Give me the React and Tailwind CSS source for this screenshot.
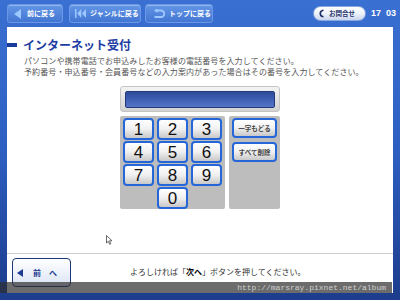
import React from "react"

const jp = { fontFamily: '"Noto Sans CJK JP", "Noto Sans", sans-serif' }

function TopButton({ icon, label, className }) {
    return (
        <div className={`h-[19px] shrink-0 flex items-center rounded-[3px] border border-[#6a98e6] bg-gradient-to-b from-[#6496e6] to-[#4276d2] shadow-[inset_0_1px_0_rgba(255,255,255,0.3)] ${className}`}>
            {icon}
            <span className="text-[7px] font-bold text-white leading-none whitespace-nowrap">{label}</span>
        </div>
    )
}

function Key({ n }) {
    return (
        <div className="h-[22px] rounded-[4px] border-2 border-[#2566d8] bg-gradient-to-b from-white via-[#f0f0f0] to-[#c8c8c8] flex items-center justify-center text-[17px] leading-none text-[#111]" style={{ fontFamily: '"Liberation Sans", Arial, sans-serif' }}>
            {n}
        </div>
    )
}

function SideKey({ label }) {
    return (
        <div className="h-[20px] rounded-[4px] border-2 border-[#2566d8] bg-gradient-to-b from-white via-[#f0f0f0] to-[#c8c8c8] flex items-center justify-center text-[6.5px] font-bold text-[#444] leading-none whitespace-nowrap">
            {label}
        </div>
    )
}

export default function App() {
    return (
        <div className="w-[400px] h-[300px] relative overflow-hidden bg-gradient-to-b from-[#3a70d2] via-[#2d5fc2] to-[#1d3c8c]" style={jp}>
            {/* top bar */}
            <div className="h-[27px] flex items-center pl-[7px] pr-[4px]">
                <TopButton
                    className="w-[56px] pl-[6px] gap-[5px]"
                    label="前に戻る"
                    icon={<svg width="8" height="10" viewBox="0 0 8 10"><path d="M7 0 L0 5 L7 10 Z" fill="#9cc7ff" /></svg>}
                />
                <TopButton
                    className="w-[72px] ml-[6px] pl-[5px] gap-[3px]"
                    label="ジャンルに戻る"
                    icon={<svg width="12" height="9" viewBox="0 0 12 9"><rect x="0" y="0" width="1.5" height="9" fill="#9cc7ff" /><path d="M6.3 0 L2.2 4.5 L6.3 9 Z M11 0 L6.9 4.5 L11 9 Z" fill="#9cc7ff" /></svg>}
                />
                <TopButton
                    className="w-[68px] ml-[4px] pl-[7px] gap-[4px]"
                    label="トップに戻る"
                    icon={<svg width="12" height="10" viewBox="0 0 12 10"><path d="M4 1.5 H8 A3.2 3.2 0 0 1 8 8 H1.5" stroke="#9cc7ff" strokeWidth="1.8" fill="none" /><path d="M4.5 -1 L1 1.5 L4.5 4 Z" fill="#9cc7ff" /></svg>}
                />
                <div className="flex-1" />
                <div className="w-[53px] h-[15px] rounded-full bg-gradient-to-b from-white via-[#eef3fb] to-[#c9d6ee] border border-[#8aa8dc] flex items-center pl-[5px] gap-[5px]">
                    <svg width="5" height="9" viewBox="0 0 5 9"><path d="M4.5 0.5 C1 1 0.5 3 0.5 4.5 C0.5 6 1 8 4.5 8.5 L4.5 7 C2.5 6.5 2.2 5.5 2.2 4.5 C2.2 3.5 2.5 2.5 4.5 2 Z" fill="#1c2f66" /></svg>
                    <span className="text-[6.5px] font-bold text-[#1d3068] leading-none whitespace-nowrap">お問合せ</span>
                </div>
                <div className="ml-[5px] text-[9px] font-bold text-white leading-none whitespace-nowrap" style={{ fontFamily: '"Liberation Sans", Arial, sans-serif' }}>17&nbsp;&nbsp;03</div>
            </div>

            {/* main panel */}
            <div className="ml-[7px] w-[386px] h-[266px] bg-white flex flex-col">
                <div className="flex items-center pt-[10px]">
                    <div className="w-[10px] h-[4px] bg-[#1a3a9c]" />
                    <div className="ml-[6px] text-[12px] font-bold text-[#1e3ea4] leading-[16px]">インターネット受付</div>
                </div>
                <div className="pl-[17px] pt-[2px] text-[8px] text-[#555] leading-[11px] tracking-[0.1px]">
                    <div>パソコンや携帯電話でお申込みしたお客様の電話番号を入力してください。</div>
                    <div>予約番号・申込番号・会員番号などの入力案内があった場合はその番号を入力してください。</div>
                </div>

                {/* keypad */}
                <div className="ml-[113px] mt-[9px] w-[160px] flex flex-col gap-[4px]">
                    <div className="h-[26px] rounded-[3px] border border-[#c4c4c4] bg-gradient-to-b from-[#f4f4f4] to-[#d2d2d2] px-[4px] pt-[4px]">
                        <div className="h-[17px] rounded-[2px] bg-gradient-to-b from-[#2e4a98] via-[#3e5fb4] to-[#5576c6] border border-[#22397c]" />
                    </div>
                    <div className="flex gap-[4px]">
                        <div className="w-[105px] h-[93px] bg-[#bdbdbd] rounded-[2px] p-[2px_3px] grid grid-cols-3 gap-x-[3px] gap-y-[1px] content-start">
                            {[1, 2, 3, 4, 5, 6, 7, 8, 9].map(n => <Key key={n} n={n} />)}
                            <div />
                            <Key n={0} />
                        </div>
                        <div className="w-[51px] h-[93px] bg-[#bdbdbd] rounded-[2px] p-[2px_3px] flex flex-col gap-[4px]">
                            <SideKey label="一字もどる" />
                            <SideKey label="すべて削除" />
                        </div>
                    </div>
                </div>

                {/* cursor */}
                <div className="ml-[99px] mt-[26px]">
                    <svg width="7" height="10" viewBox="0 0 7 10"><path d="M0.5 0.5 L0.5 8 L2.3 6.3 L3.6 9.3 L4.8 8.8 L3.5 5.8 L6 5.8 Z" fill="white" stroke="#444" strokeWidth="0.8" /></svg>
                </div>

                <div className="mt-[8px] h-px bg-[#cccccc]" />

                {/* footer */}
                <div className="flex items-center pt-[4px]">
                    <div className="ml-[5px] w-[59px] h-[29px] rounded-[4px] border-[1.5px] border-[#1b3777] bg-gradient-to-b from-white to-[#dbe4f4] flex items-center pl-[4px]">
                        <svg width="6" height="8" viewBox="0 0 6 8"><path d="M6 0 L0 4 L6 8 Z" fill="#1b3a92" /></svg>
                        <span className="ml-[10px] text-[8px] font-bold text-[#1b3a92] leading-none">前</span>
                        <span className="ml-[8px] text-[8px] font-bold text-[#1b3a92] leading-none">へ</span>
                    </div>
                    <div className="ml-[59px] mt-[-1px] text-[8px] text-[#333] leading-none whitespace-nowrap">
                        よろしければ「<span className="font-bold text-black">次へ</span>」ボタンを押してください。
                    </div>
                </div>
            </div>

            {/* watermark band */}
            <div className="absolute left-0 top-[282px] w-[392px] h-[11px] bg-[rgba(45,45,45,0.7)] flex items-center justify-end pr-[6px]">
                <span className="text-[8px] text-[#cfcfcf] leading-none whitespace-nowrap" style={{ fontFamily: '"Liberation Mono", monospace' }}>http://marsray.pixnet.net/album</span>
            </div>
        </div>
    )
}
